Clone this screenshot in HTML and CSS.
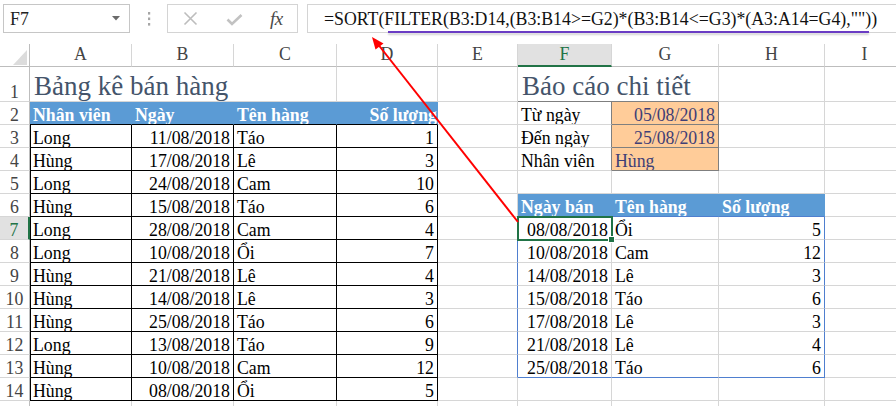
FILE: index.html
```
<!DOCTYPE html>
<html lang="vi">
<head>
<meta charset="utf-8">
<title>SORT FILTER</title>
<link rel="stylesheet" href="styles.css">
</head>
<body>
<div class="bar">
  <div class="namebox"><span>F7</span><svg class="dd" width="8" height="5" viewBox="0 0 8 5"><polygon points="0,0 8,0 4,4.5" fill="#6b6b6b"/></svg></div>
  <div class="dots"><svg width="4" height="16" viewBox="0 0 4 16"><rect x="1" y="1" width="2.2" height="2.6" fill="#a6a6a6"/><rect x="1" y="6.5" width="2.2" height="2.6" fill="#a6a6a6"/><rect x="1" y="12" width="2.2" height="2.6" fill="#a6a6a6"/></svg></div>
  <div class="btns">
    <svg class="ic-x" width="15" height="15" viewBox="0 0 15 15"><path d="M1.5 1.5 L13.5 13.5 M13.5 1.5 L1.5 13.5" stroke="#bdbdbd" stroke-width="1.6" fill="none"/></svg>
    <svg class="ic-ok" width="17" height="12" viewBox="0 0 17 12"><path d="M1.5 5.5 L6 10 L15.5 1" stroke="#c2c2c2" stroke-width="2.6" fill="none"/></svg>
    <span class="fx">fx</span>
  </div>
  <div class="formula">=SORT(<span class="ul">FILTER(B3:D14,(B3:B14&gt;=G2)*(B3:B14&lt;=G3)*(A3:A14=G4),""</span>))</div>
</div>

<div class="sheet">
  <div class="corner"><svg width="30" height="23" viewBox="0 0 30 23"><polygon points="13,21 27,21 27,6" fill="#dcdcdc"/></svg></div>
  <div class="ch">A</div><div class="ch">B</div><div class="ch">C</div><div class="ch">D</div><div class="ch">E</div><div class="ch sel">F</div><div class="ch">G</div><div class="ch">H</div><div class="ch">I</div>

  <div class="rh">1</div><div class="c title span3">Bảng kê bán hàng</div><div class="c"></div><div class="c"></div><div class="c title span2 ib">Báo cáo chi tiết</div><div class="c"></div><div class="c"></div>

  <div class="rh">2</div><div class="c h">Nhân viên</div><div class="c h">Ngày</div><div class="c h">Tên hàng</div><div class="c h r">Số lượng</div><div class="c"></div><div class="c ir">Từ ngày</div><div class="c in r">05/08/2018</div><div class="c"></div><div class="c"></div>

  <div class="rh">3</div><div class="c t tl">Long</div><div class="c t r">11/08/2018</div><div class="c t">Táo</div><div class="c t r">1</div><div class="c"></div><div class="c ir">Đến ngày</div><div class="c in r">25/08/2018</div><div class="c"></div><div class="c"></div>

  <div class="rh">4</div><div class="c t tl">Hùng</div><div class="c t r">17/08/2018</div><div class="c t">Lê</div><div class="c t r">3</div><div class="c"></div><div class="c ir">Nhân viên</div><div class="c in">Hùng</div><div class="c"></div><div class="c"></div>

  <div class="rh">5</div><div class="c t tl">Long</div><div class="c t r">24/08/2018</div><div class="c t">Cam</div><div class="c t r">10</div><div class="c"></div><div class="c"></div><div class="c"></div><div class="c"></div><div class="c"></div>

  <div class="rh">6</div><div class="c t tl">Hùng</div><div class="c t r">15/08/2018</div><div class="c t">Táo</div><div class="c t r">6</div><div class="c"></div><div class="c hs">Ngày bán</div><div class="c hs">Tên hàng</div><div class="c hs">Số lượng</div><div class="c"></div>

  <div class="rh sel">7</div><div class="c t tl">Long</div><div class="c t r">28/08/2018</div><div class="c t">Cam</div><div class="c t r">4</div><div class="c sr"></div><div class="c r cur">08/08/2018</div><div class="c">Ổi</div><div class="c r sr">5</div><div class="c"></div>

  <div class="rh">8</div><div class="c t tl">Long</div><div class="c t r">10/08/2018</div><div class="c t">Ổi</div><div class="c t r">7</div><div class="c sr"></div><div class="c r">10/08/2018</div><div class="c">Cam</div><div class="c r sr">12</div><div class="c"></div>

  <div class="rh">9</div><div class="c t tl">Hùng</div><div class="c t r">21/08/2018</div><div class="c t">Lê</div><div class="c t r">4</div><div class="c sr"></div><div class="c r">14/08/2018</div><div class="c">Lê</div><div class="c r sr">3</div><div class="c"></div>

  <div class="rh">10</div><div class="c t tl">Hùng</div><div class="c t r">14/08/2018</div><div class="c t">Lê</div><div class="c t r">3</div><div class="c sr"></div><div class="c r">15/08/2018</div><div class="c">Táo</div><div class="c r sr">6</div><div class="c"></div>

  <div class="rh">11</div><div class="c t tl">Hùng</div><div class="c t r">25/08/2018</div><div class="c t">Táo</div><div class="c t r">6</div><div class="c sr"></div><div class="c r">17/08/2018</div><div class="c">Lê</div><div class="c r sr">3</div><div class="c"></div>

  <div class="rh">12</div><div class="c t tl">Long</div><div class="c t r">13/08/2018</div><div class="c t">Táo</div><div class="c t r">9</div><div class="c sr"></div><div class="c r">21/08/2018</div><div class="c">Lê</div><div class="c r sr">4</div><div class="c"></div>

  <div class="rh">13</div><div class="c t tl">Hùng</div><div class="c t r">10/08/2018</div><div class="c t">Cam</div><div class="c t r">12</div><div class="c sr"></div><div class="c r sb">25/08/2018</div><div class="c sb">Táo</div><div class="c r sr sb">6</div><div class="c"></div>

  <div class="rh">14</div><div class="c t tl">Hùng</div><div class="c t r">08/08/2018</div><div class="c t">Ổi</div><div class="c t r">5</div><div class="c"></div><div class="c"></div><div class="c"></div><div class="c"></div><div class="c"></div>

  <div class="rh"></div><div class="c"></div><div class="c"></div><div class="c"></div><div class="c"></div><div class="c"></div><div class="c"></div><div class="c"></div><div class="c"></div><div class="c"></div>
</div>

<svg class="arrow" width="896" height="406" viewBox="0 0 896 406">
  <line x1="518" y1="222" x2="377" y2="43" stroke="#ff0000" stroke-width="2"/>
  <polygon points="372,37 383.5,43.5 375.5,49.5" fill="#ff0000"/>
</svg>
</body>
</html>
```
FILE: styles.css
```
html, body {
  margin: 0;
  padding: 0;
  background: #ffffff;
  overflow: hidden;
  width: 896px;
  height: 406px;
}
body {
  position: relative;
  font-family: "Liberation Serif", "Times New Roman", serif;
  font-size: 17.8px;
  color: #000;
}

/* ---------- formula bar ---------- */
.bar {
  height: 44px;
  box-sizing: border-box;
  padding-top: 4px;
  display: flex;
  align-items: flex-start;
}
.namebox {
  margin-left: 3px;
  width: 127px;
  height: 29px;
  box-sizing: border-box;
  border: 1px solid #c6c6c6;
  display: flex;
  align-items: center;
  justify-content: space-between;
  padding: 1px 9px 0 6px;
  color: #222;
  line-height: 20px;
}
.dd { margin-top: -2px; }
.dots {
  width: 37px;
  height: 29px;
  display: flex;
  align-items: center;
  justify-content: center;
}
.btns {
  width: 131px;
  height: 29px;
  box-sizing: border-box;
  border: 1px solid #d4d4d4;
  display: flex;
  align-items: center;
}
.ic-x { margin-left: 15px; }
.ic-ok { margin-left: 28px; margin-top: 2px; }
.fx {
  margin-left: 27px;
  font-style: italic;
  font-size: 19px;
  color: #4a4a4a;
  letter-spacing: -0.5px;
}
.formula {
  margin-left: 9px;
  flex: 1;
  height: 29px;
  box-sizing: border-box;
  border: 1px solid #d4d4d4;
  border-right: none;
  padding: 1px 0 0 16px;
  line-height: 27px;
  white-space: nowrap;
  color: #111;
  font-size: 17.8px;
}
.ul { position: relative; }
.ul::after {
  content: "";
  position: absolute;
  left: 4px;
  right: -4px;
  bottom: -4px;
  height: 2px;
  background: #6a3cc4;
  box-shadow: 0 2px 2px rgba(0, 0, 0, 0.18);
}

/* ---------- sheet grid ---------- */
.sheet {
  display: grid;
  grid-template-columns: 30px 102px 102px 103px 101px 80px 94px 107px 106px 80px;
  grid-template-rows: 23px 35px repeat(14, 23px);
}
.corner {
  border-right: 1px solid #bdbdbd;
  border-bottom: 1px solid #bdbdbd;
}
.corner svg { display: block; }
.ch {
  box-sizing: border-box;
  border-right: 1px solid #d6d6d6;
  border-bottom: 1px solid #bdbdbd;
  display: flex;
  align-items: flex-end;
  justify-content: center;
  line-height: 18px;
  padding-bottom: 3px;
  color: #444;
}
.ch.sel {
  background: #e1e1e1;
  color: #217346;
  border-bottom: 2px solid #217346;
  padding-bottom: 2px;
}
.rh {
  box-sizing: border-box;
  border-right: 1px solid #bdbdbd;
  border-bottom: 1px solid #d6d6d6;
  display: flex;
  align-items: flex-end;
  justify-content: center;
  line-height: 18px;
  color: #444;
}
.rh.sel {
  background: #e1e1e1;
  color: #217346;
  border-right: 2px solid #217346;
}
.c {
  box-sizing: border-box;
  border-right: 1px solid #d6d6d6;
  border-bottom: 1px solid #d6d6d6;
  display: flex;
  align-items: flex-end;
  padding: 0 3px;
  line-height: 18px;
  white-space: nowrap;
  overflow: hidden;
}
.r { justify-content: flex-end; padding-right: 3px; }

.title {
  font-size: 27px;
  line-height: 27px;
  color: #44546a;
  padding-bottom: 1px;
  padding-left: 4px;
}
.span3 { grid-column: span 3; }
.span2 { grid-column: span 2; }

/* left table */
.t { border-right-color: #000; border-bottom-color: #000; }
.tl { box-shadow: inset 1px 0 0 #000; }
.h {
  background: #5b9bd5;
  color: #fff;
  font-weight: bold;
  border-right-color: #5b9bd5;
  border-bottom-color: #000;
}
.h.r { padding-right: 0; }

/* report inputs */
.in {
  background: #ffcc99;
  color: #3f3f76;
  border-right-color: #7f7f7f;
  border-bottom-color: #7f7f7f;
}
.ib { border-bottom-color: #7f7f7f; }
.ir { border-right-color: #7f7f7f; }

/* spill result */
.hs {
  background: #5b9bd5;
  color: #fff;
  font-weight: bold;
  border-right-color: #5b9bd5;
  border-bottom-color: #4f7fcf;
}
.sr { border-right-color: #4f7fcf; }
.sb { border-bottom-color: #4f7fcf; }

.cur {
  position: relative;
  overflow: visible;
  outline: 2px solid #217346;
  outline-offset: -1px;
  z-index: 2;
}
.cur::after {
  content: "";
  position: absolute;
  right: -4px;
  bottom: -4px;
  width: 5px;
  height: 5px;
  background: #217346;
  border: 1px solid #fff;
}

.arrow {
  position: absolute;
  left: 0;
  top: 0;
  pointer-events: none;
  z-index: 5;
}
```
